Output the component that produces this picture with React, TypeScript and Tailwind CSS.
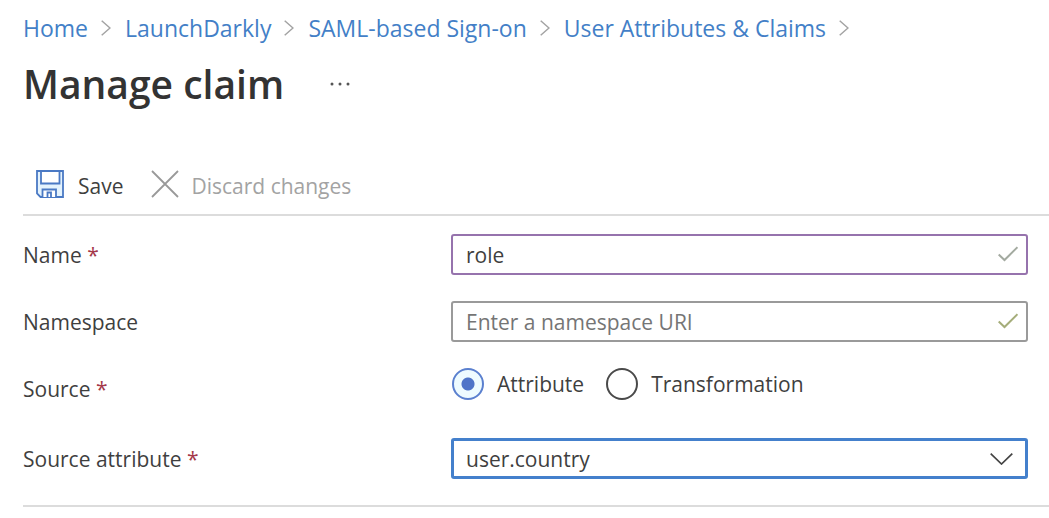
import { useState } from "react";
import type { ReactNode } from "react";

const crumbs = ["Home", "LaunchDarkly", "SAML-based Sign-on", "User Attributes & Claims"];

function Separator() {
  return (
    <svg className="ml-[13px] mr-3.5 h-4 w-2.5 shrink-0" viewBox="0 0 10 16" fill="none" stroke="#a3a3a3" strokeWidth="1.5" aria-hidden="true">
      <path d="M0.7 0.7 9 8 0.7 15.3" />
    </svg>
  );
}

function SaveIcon() {
  return (
    <svg className="size-7 shrink-0" viewBox="0 0 28 28" fill="none" stroke="#4a79c4" strokeWidth="1.8" aria-hidden="true">
      <path d="M1 1h26v26H4.500L1 23.500z" fill="#e4f3fd" />
      <path d="M5 1h18.500v12.500H5z" fill="#fff" />
      <path d="M6.500 27v-7.500h13.500V27" fill="#fff" />
      <path d="M11.500 27v-4.500h3.500V27" />
    </svg>
  );
}

function DiscardIcon() {
  return (
    <svg className="size-7 shrink-0" viewBox="0 0 28 28" fill="none" stroke="#999" strokeWidth="1.8" aria-hidden="true">
      <path d="M1 1 27 27M27 1 1 27" />
    </svg>
  );
}

function Check({ className }: { className: string }) {
  return (
    <svg className={`pointer-events-none absolute right-2.5 top-3 h-4 w-5 ${className}`} viewBox="0 0 20 16" fill="none" stroke="currentColor" strokeWidth="2" aria-hidden="true">
      <path d="M0.700 8.500 6.500 14 19.500 1.200" />
    </svg>
  );
}

function FieldLabel({ htmlFor, required, children }: { htmlFor: string; required?: boolean; children: ReactNode }) {
  return (
    <label htmlFor={htmlFor}>
      {children}
      {required && <span className="text-[#a4384a]"> *</span>}
    </label>
  );
}

const rowClass = "grid grid-cols-[428px_minmax(0,1fr)] items-center";
const inputClass = "block h-[41px] w-full rounded-[3px] border-2 bg-white pl-[13px] pr-10 outline-none placeholder:text-[#757575] placeholder:opacity-100";
const radioClass =
  "size-8 shrink-0 appearance-none rounded-full border-2 border-[#4a4a4a] bg-white outline-none checked:border-[#5b80cf] checked:bg-[radial-gradient(circle,#4f74c8_6px,#eefbff_7px)]";

export default function App() {
  const [name, setName] = useState("role");
  const [namespace, setNamespace] = useState("");
  const [source, setSource] = useState("attribute");
  const [attribute, setAttribute] = useState("user.country");

  return (
    <main className="bg-white pl-[23px] font-['Open_Sans','Noto_Sans',sans-serif] text-[21px] leading-7 text-[#3f3f3f]">
      <nav aria-label="Breadcrumb" className="pt-3.5">
        <ol className="flex items-center text-[23px] leading-7">
          {crumbs.map((crumb) => (
            <li key={crumb} className="flex items-center whitespace-nowrap text-[#437fc7]">
              <a href="#">{crumb}</a>
              <Separator />
            </li>
          ))}
        </ol>
      </nav>

      <header className="flex items-center gap-11 pt-[17px]">
        <h1 className="text-[39px] font-semibold leading-[50px] text-[#333]">Manage claim</h1>
        <button type="button" aria-label="More options" className="px-0.5">
          <svg className="h-1 w-5" viewBox="0 0 20 4" fill="#555" aria-hidden="true">
            <circle cx="2" cy="2" r="1.500" />
            <circle cx="10" cy="2" r="1.500" />
            <circle cx="18" cy="2" r="1.500" />
          </svg>
        </button>
      </header>

      <div role="toolbar" className="mt-[59px] flex items-center gap-7 border-b-2 border-[#dcdcdc] pb-3.5 pl-[13px]">
        <button type="button" className="flex items-center gap-3.5">
          <SaveIcon />
          <span className="pt-1">Save</span>
        </button>
        <button type="button" disabled className="flex items-center gap-3 text-[#a3a3a3]">
          <DiscardIcon />
          <span className="pt-1">Discard changes</span>
        </button>
      </div>

      <form className="border-b-2 border-[#dcdcdc] pb-[26px] pt-[18px]">
        <div className="pr-[21px]">
          <div className={rowClass}>
            <FieldLabel htmlFor="name" required>Name</FieldLabel>
            <div className="relative">
              <input id="name" className={`${inputClass} border-[#9673ad]`} value={name} onChange={(e) => setName(e.target.value)} />
              <Check className="text-[#a3aaa0]" />
            </div>
          </div>

          <div className={`${rowClass} mt-[26px]`}>
            <FieldLabel htmlFor="namespace">Namespace</FieldLabel>
            <div className="relative">
              <input
                id="namespace"
                className={`${inputClass} border-[#9a9a9a]`}
                placeholder="Enter a namespace URI"
                value={namespace}
                onChange={(e) => setNamespace(e.target.value)}
              />
              <Check className="text-[#a5ad7a]" />
            </div>
          </div>

          <div role="radiogroup" aria-labelledby="source-label" className={`${rowClass} mt-6`}>
            <span id="source-label" className="pt-[9px]">
              Source<span className="text-[#a4384a]"> *</span>
            </span>
            <div className="flex items-center gap-[22px] pb-0.5 pl-px">
              <label className="flex items-center gap-[13px]">
                <input type="radio" name="source" className={radioClass} checked={source === "attribute"} onChange={() => setSource("attribute")} />
                Attribute
              </label>
              <label className="flex items-center gap-[13px]">
                <input type="radio" name="source" className={radioClass} checked={source === "transformation"} onChange={() => setSource("transformation")} />
                Transformation
              </label>
            </div>
          </div>

          <div className={`${rowClass} mt-[35px]`}>
            <FieldLabel htmlFor="attribute" required>Source attribute</FieldLabel>
            <div className="relative">
              <select
                id="attribute"
                className="block h-[41px] w-full appearance-none rounded-[3px] border-3 border-[#4480cc] bg-white pl-3 pr-10 outline-none"
                value={attribute}
                onChange={(e) => setAttribute(e.target.value)}
              >
                <option>user.country</option>
              </select>
              <svg className="pointer-events-none absolute right-[15px] top-[15px] h-3 w-[23px]" viewBox="0 0 23 12" fill="none" stroke="#444" strokeWidth="1.700" aria-hidden="true">
                <path d="M0.700 0.700 11.500 11 22.300 0.700" />
              </svg>
            </div>
          </div>
        </div>
      </form>
    </main>
  );
}
